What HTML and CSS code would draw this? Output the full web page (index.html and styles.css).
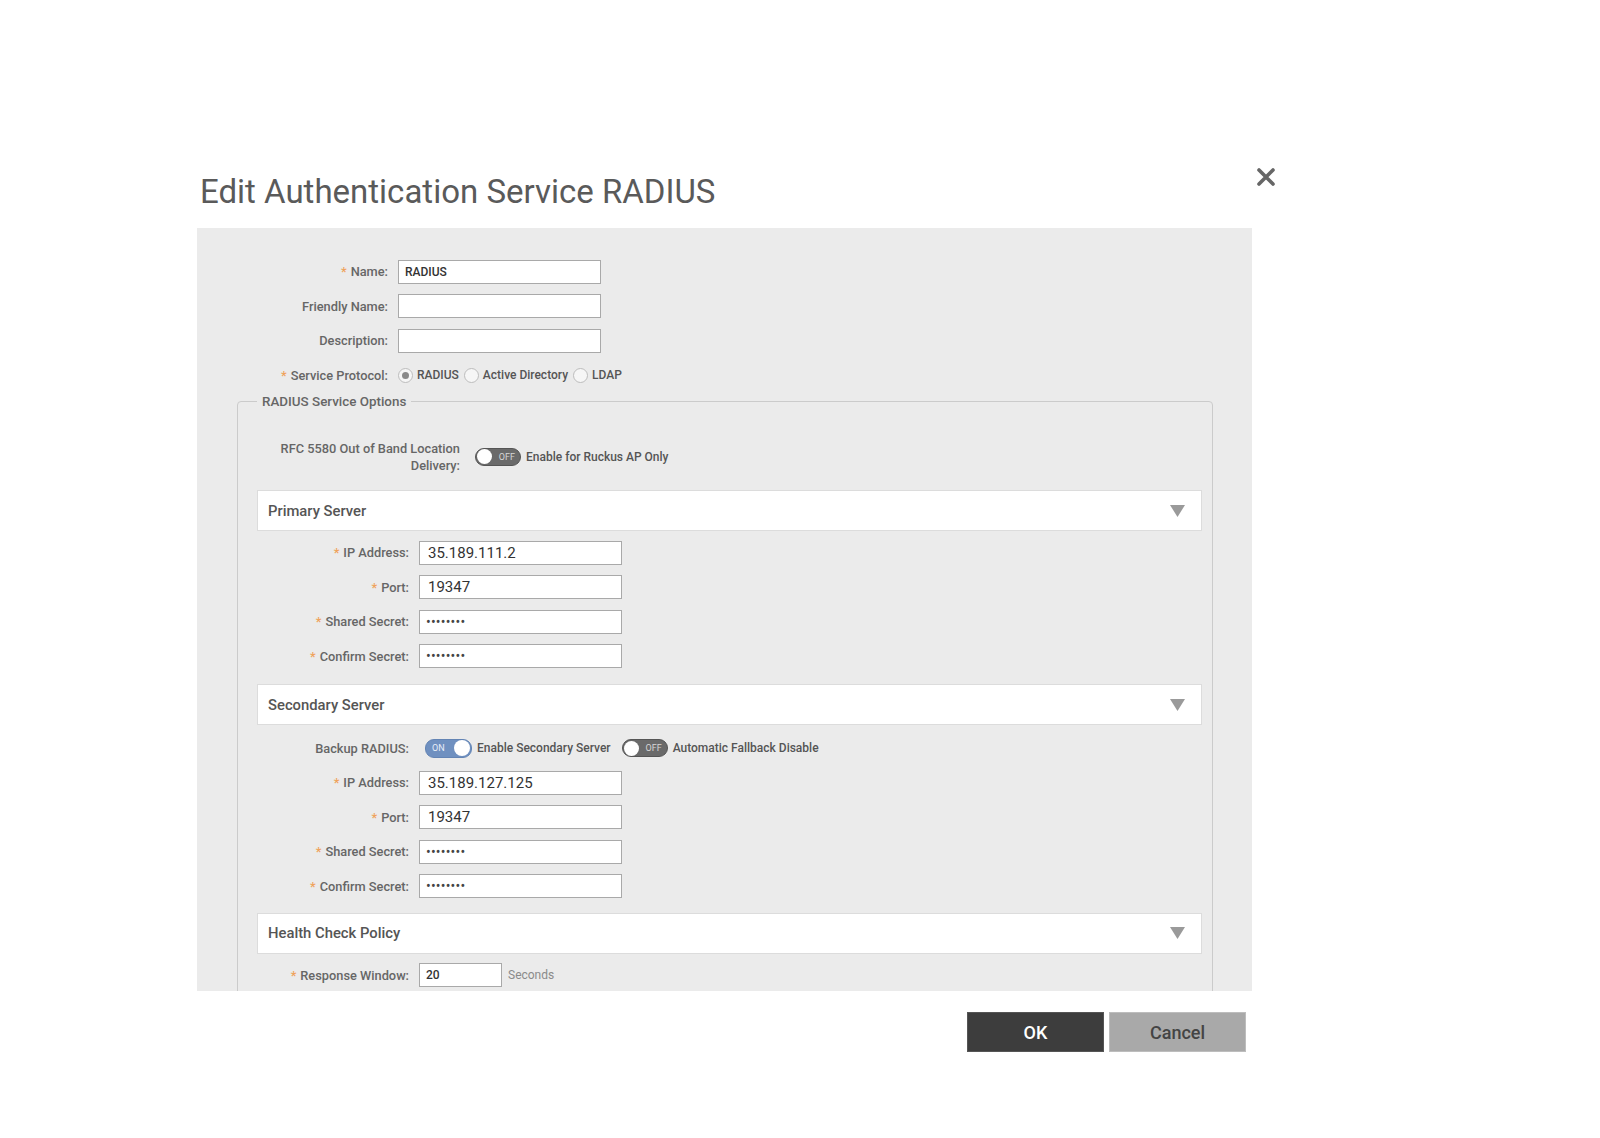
FILE: index.html
```html
<!DOCTYPE html>
<html lang="en">
<head>
<meta charset="utf-8">
<title>Edit Authentication Service RADIUS</title>
<link rel="stylesheet" href="styles.css">
</head>
<body>
<div class="dialog">
  <div class="header">
    <h1 class="title">Edit Authentication Service RADIUS</h1>
    <button class="close" aria-label="Close">
      <svg width="18" height="18" viewBox="0 0 18 18"><path d="M2 2 L16 16 M16 2 L2 16" stroke="#666" stroke-width="3.6" stroke-linecap="round"/></svg>
    </button>
  </div>

  <div class="panel">
    <div class="row"><span class="lbl req">Name:</span><span class="field small">RADIUS</span></div>
    <div class="row"><span class="lbl">Friendly Name:</span><span class="field"></span></div>
    <div class="row"><span class="lbl">Description:</span><span class="field"></span></div>
    <div class="row">
      <span class="lbl req">Service Protocol:</span>
      <span class="radio on"></span><span class="rtext">RADIUS</span>
      <span class="radio"></span><span class="rtext">Active Directory</span>
      <span class="radio"></span><span class="rtext">LDAP</span>
    </div>

    <fieldset class="options">
      <legend>RADIUS Service Options</legend>

      <div class="rfc-row">
        <span class="rfc-lbl">RFC 5580 Out of Band Location<br>Delivery:</span>
        <span class="toggle off"><span class="knob"></span><span class="ttext">OFF</span></span>
        <span class="opt">Enable for Ruckus AP Only</span>
      </div>

      <div class="section first">
        <div class="sec-head"><span>Primary Server</span><svg class="tri" width="15" height="12" viewBox="0 0 15 12"><polygon points="0,0 15,0 7.5,12" fill="#9a9a9a"/></svg></div>
        <div class="sec-body">
          <div class="srow"><span class="lbl req">IP Address:</span><span class="field">35.189.111.2</span></div>
          <div class="srow"><span class="lbl req">Port:</span><span class="field">19347</span></div>
          <div class="srow"><span class="lbl req">Shared Secret:</span><span class="field pw">••••••••</span></div>
          <div class="srow"><span class="lbl req">Confirm Secret:</span><span class="field pw">••••••••</span></div>
        </div>
      </div>

      <div class="section">
        <div class="sec-head"><span>Secondary Server</span><svg class="tri" width="15" height="12" viewBox="0 0 15 12"><polygon points="0,0 15,0 7.5,12" fill="#9a9a9a"/></svg></div>
        <div class="sec-body second-body">
          <div class="srow">
            <span class="lbl">Backup RADIUS:</span>
            <span class="toggle on"><span class="ttext">ON</span><span class="knob"></span></span>
            <span class="opt">Enable Secondary Server</span>
            <span class="toggle off second"><span class="knob"></span><span class="ttext">OFF</span></span>
            <span class="opt">Automatic Fallback Disable</span>
          </div>
          <div class="srow"><span class="lbl req">IP Address:</span><span class="field">35.189.127.125</span></div>
          <div class="srow"><span class="lbl req">Port:</span><span class="field">19347</span></div>
          <div class="srow"><span class="lbl req">Shared Secret:</span><span class="field pw">••••••••</span></div>
          <div class="srow"><span class="lbl req">Confirm Secret:</span><span class="field pw">••••••••</span></div>
        </div>
      </div>

      <div class="section">
        <div class="sec-head"><span>Health Check Policy</span><svg class="tri" width="15" height="12" viewBox="0 0 15 12"><polygon points="0,0 15,0 7.5,12" fill="#9a9a9a"/></svg></div>
        <div class="sec-body">
          <div class="srow"><span class="lbl req">Response Window:</span><span class="field short small">20</span><span class="unit">Seconds</span></div>
        </div>
      </div>
    </fieldset>
  </div>

  <div class="footer">
    <button class="btn ok">OK</button>
    <button class="btn cancel">Cancel</button>
  </div>
</div>
</body>
</html>
```

FILE: styles.css
```css
* { box-sizing: border-box; }

body {
  margin: 0;
  background: #ffffff;
  font-family: Roboto, "Liberation Sans", sans-serif;
  color: #555555;
}

.dialog {
  width: 1078px;
  margin-left: 197px;
}

.header {
  display: flex;
  justify-content: space-between;
  align-items: flex-start;
  height: 228px;
  padding-top: 172px;
}

.title {
  margin: 0 0 0 3px;
  font-size: 33px;
  font-weight: 400;
  line-height: 40px;
  color: #5a5a5a;
}

.close {
  width: 18px;
  height: 18px;
  margin-top: -4px;
  padding: 0;
  border: 0;
  background: none;
}
.close svg { display: block; }

.panel {
  width: 1055px;
  height: 763px;
  overflow: hidden;
  background: #ebebeb;
  padding-top: 26.5px;
}

.row {
  display: flex;
  align-items: center;
  height: 34.5px;
}

.lbl {
  flex: none;
  width: 191px;
  margin-right: 10px;
  text-align: right;
  font-size: 12.8px;
  font-weight: 500;
  color: #666666;
}

.req::before {
  content: "*";
  color: #efa35c;
  margin-right: 4px;
}

.field {
  flex: none;
  display: flex;
  align-items: center;
  width: 203px;
  height: 24px;
  padding-left: 8px;
  background: #ffffff;
  border: 1px solid #a9a9a9;
  font-size: 15px;
  color: #333333;
}
.field.small {
  font-size: 12px;
  font-weight: 500;
  padding-left: 6px;
}
.field.pw {
  font-size: 14px;
  letter-spacing: 0.2px;
  padding-left: 6px;
  color: #444444;
}
.field.short { width: 83px; }

.unit {
  margin-left: 6px;
  font-size: 12px;
  color: #8a8a8a;
}

.radio {
  flex: none;
  width: 15px;
  height: 15px;
  border-radius: 50%;
  border: 1px solid #bdbdbd;
  background: #f6f6f6;
  display: flex;
  align-items: center;
  justify-content: center;
}
.radio.on::after {
  content: "";
  width: 7px;
  height: 7px;
  border-radius: 50%;
  background: #8a8a8a;
}
.rtext {
  margin: 0 5px 0 4px;
  font-size: 12px;
  font-weight: 500;
  color: #555555;
}

.options {
  margin: 1px 39px 0 40px;
  padding: 0 10px 30px 19px;
  border: 1px solid #cbcbcb;
  border-radius: 4px;
  min-width: 0;
}
.options legend {
  padding: 0 5px;
  font-size: 13.4px;
  font-weight: 500;
  line-height: 16px;
  color: #666666;
}

.rfc-row {
  display: flex;
  align-items: center;
  margin-top: 30px;
}
.rfc-lbl {
  flex: none;
  width: 203px;
  margin-right: 15px;
  text-align: right;
  font-size: 12.8px;
  font-weight: 500;
  line-height: 17px;
  color: #666666;
}

.toggle {
  flex: none;
  display: flex;
  align-items: center;
  justify-content: space-between;
  width: 46px;
  height: 18px;
  padding: 0 1px;
  border-radius: 9px;
}
.toggle.off {
  background: #6a6a6a;
  border: 1px solid #555555;
}
.toggle.on {
  width: 47px;
  height: 19px;
  margin-left: 6px;
  background: #6f90c0;
  border: 1px solid #6384b4;
  padding-left: 6px;
}
.toggle.second { margin-left: 11px; }
.knob {
  width: 15px;
  height: 15px;
  border-radius: 50%;
  background: #ffffff;
}
.toggle.on .knob { width: 16px; height: 16px; }
.ttext {
  font-size: 9px;
  color: #d6d6d6;
  padding-right: 4px;
}
.toggle.on .ttext { color: #e8eef8; padding-right: 0; }

.opt {
  margin-left: 5px;
  font-size: 12px;
  font-weight: 500;
  color: #555555;
}

.section.first { margin-top: 16.5px; }

.sec-head {
  display: flex;
  align-items: center;
  justify-content: space-between;
  height: 41px;
  padding: 0 16px 0 10px;
  background: #ffffff;
  border: 1px solid #dcdcdc;
  font-size: 14.8px;
  font-weight: 500;
  color: #555555;
}
.tri { display: block; }

.sec-body {
  padding: 4.5px 0 10.5px;
}
.sec-body.second-body {
  padding-top: 6px;
  padding-bottom: 9px;
}

.srow {
  display: flex;
  align-items: center;
  height: 34.5px;
}
.srow .lbl { width: 152px; }

.footer {
  display: flex;
  justify-content: flex-end;
  gap: 5px;
  width: 1055px;
  padding-right: 6px;
  margin-top: 21px;
}

.btn {
  width: 137px;
  height: 40px;
  font-family: inherit;
  font-size: 18px;
  font-weight: 500;
  padding: 0;
}
.ok {
  background: #3d3d3d;
  color: #ffffff;
  border: 1px solid #555555;
}
.cancel {
  background: #a9a9a9;
  color: #444444;
  border: 1px solid #bdbdbd;
}
```
